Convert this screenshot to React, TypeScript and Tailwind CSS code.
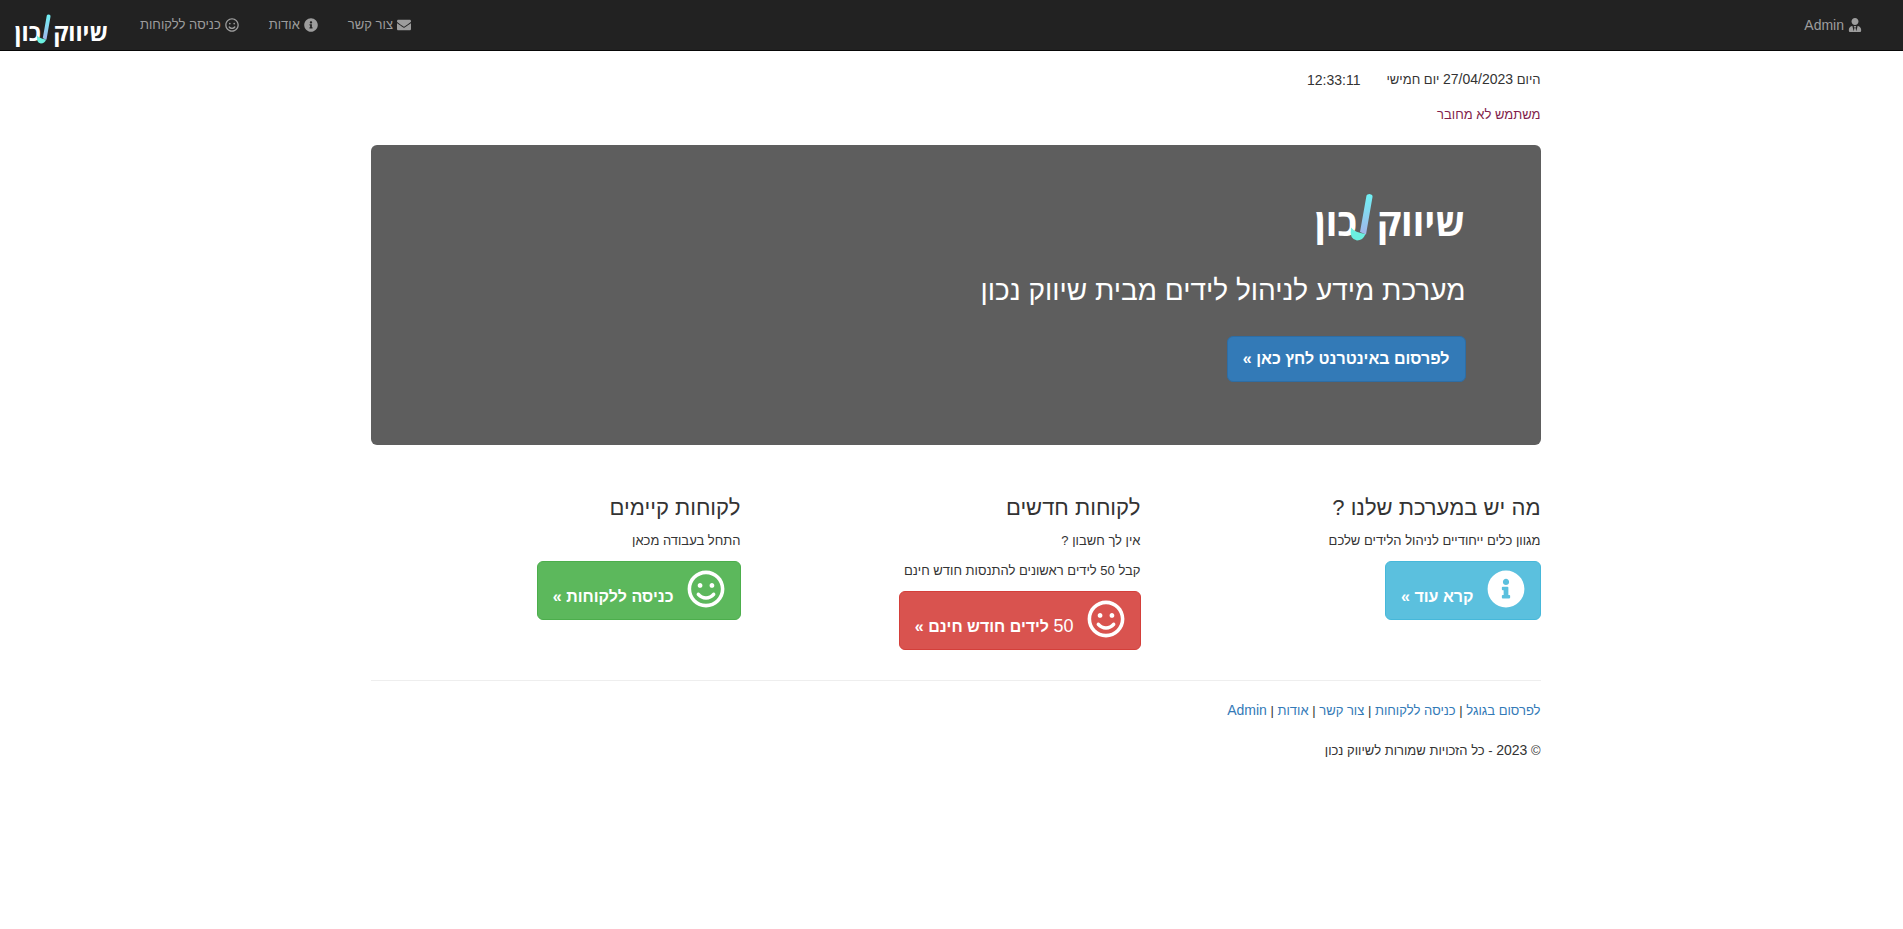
import type { ReactNode } from 'react';
import { FaEnvelope, FaInfoCircle, FaRegSmile, FaUserTie } from 'react-icons/fa';

function Logo({ id, className }: { id: string; className: string }) {
  return (
    <svg viewBox="0 0 150 58" className={`overflow-visible ${className}`} role="img" aria-label="שיווק נכון">
      <defs>
        <linearGradient id={id} x1="0" y1="0" x2="0" y2="1">
          <stop offset="0" stopColor="#6ff3f5" />
          <stop offset="1" stopColor="#a3b4ea" />
        </linearGradient>
      </defs>
      <g fill="#fff" fontFamily="'Open Sans', 'Liberation Sans', sans-serif" fontWeight="700" fontSize="38" direction="rtl">
        <text x="149" y="43">שיווק</text>
        <text x="41" y="43">כון</text>
      </g>
      <path d="M50.5 2.5 Q51 1 53.5 1 Q57 1.5 56.5 4 L50 41.5 L44 39 Z" fill={`url(#${id})`} />
      <path d="M35 34.5 Q39 39.5 49.5 41 Q47 47.5 41 47.5 Q33 46 35 34.5 Z" fill="#6bf0e0" />
    </svg>
  );
}

const navItems = [
  { label: 'צור קשר', icon: <FaEnvelope className="size-[14px]" /> },
  { label: 'אודות', icon: <FaInfoCircle className="size-[14px]" /> },
  { label: 'כניסה ללקוחות', icon: <FaRegSmile className="size-[14px]" /> },
];

const footerLinks = ['לפרסום בגוגל', 'כניסה ללקוחות', 'צור קשר', 'אודות'];

const columns = [
  {
    title: 'מה יש במערכת שלנו ?',
    lines: ['מגוון כלים ייחודיים לניהול הלידים שלכם'],
    button: 'קרא עוד »',
    icon: <FaInfoCircle className="size-[38px]" />,
    color: 'bg-[#5bc0de] border-[#46b8da]',
  },
  {
    title: 'לקוחות חדשים',
    lines: ['אין לך חשבון ?', 'קבל 50 לידים ראשונים להתנסות חודש חינם'],
    button: (
      <>
        <span className="text-lg leading-none font-normal">50</span> לידים חודש חינם »
      </>
    ),
    icon: <FaRegSmile className="size-[38px]" />,
    color: 'bg-[#d9534f] border-[#d43f3a]',
  },
  {
    title: 'לקוחות קיימים',
    lines: ['התחל בעבודה מכאן'],
    button: 'כניסה ללקוחות »',
    icon: <FaRegSmile className="size-[38px]" />,
    color: 'bg-[#5cb85c] border-[#4cae4c]',
  },
];

function NavLink({ children }: { children: ReactNode }) {
  return (
    <a href="#" className="flex items-center gap-1 px-[15px] text-[#9d9d9d] hover:text-white">
      {children}
    </a>
  );
}

export default function App() {
  return (
    <div dir="rtl" className="min-h-screen bg-white font-['Liberation_Sans',Arial,sans-serif] text-[13px] leading-5 text-[#333]">
      <nav className="flex h-[51px] justify-between border-b border-[#080808] bg-[#222] pr-[26px] pl-[15px]">
        <NavLink>
          <FaUserTie className="size-[14px]" />
          <span className="text-sm">Admin</span>
        </NavLink>
        <div className="flex">
          {navItems.map((item) => (
            <NavLink key={item.label}>
              {item.icon}
              {item.label}
            </NavLink>
          ))}
          <a href="#" className="mr-4 pt-[14px]">
            <Logo id="nav-logo" className="h-9 w-[94px]" />
          </a>
        </div>
      </nav>

      <div className="mx-auto max-w-[1200px] pt-[19px] pr-[11px] pl-[19px]">
        <p className="mb-[15px] flex gap-[26px]">
          <span>
            היום <span className="text-sm leading-none">27/04/2023</span> יום חמישי
          </span>
          <span className="text-sm leading-5">12:33:11</span>
        </p>
        <p className="mb-5 text-[#821e4b]">משתמש לא מחובר</p>

        <header className="mb-[30px] rounded-md bg-[#5e5e5e] px-[75px] pt-12 pb-[63px] text-white">
          <Logo id="hero-logo" className="h-[58px] w-[150px]" />
          <h1 className="mt-6 mb-[29px] text-[28px] leading-8">מערכת מידע לניהול לידים מבית שיווק נכון</h1>
          <a href="#" className="inline-block rounded-md border border-[#2e6da4] bg-[#337ab7] px-[15px] py-[10px] text-base leading-6 font-bold">
            לפרסום באינטרנט לחץ כאן »
          </a>
        </header>

        <main className="-mx-[15px] flex">
          {columns.map((col) => (
            <section key={col.title} className="flex-1 px-[15px]">
              <h2 className="mt-5 mb-[10px] text-[22px] leading-[26px]">{col.title}</h2>
              {col.lines.map((line) => (
                <p key={line} className="mb-[10px]">{line}</p>
              ))}
              <a href="#" className={`inline-flex h-[59px] gap-[13px] rounded-md border px-[15px] pt-2 text-base font-bold text-white ${col.color}`}>
                {col.icon}
                <span className="pt-[15px] leading-6">{col.button}</span>
              </a>
            </section>
          ))}
        </main>

        <hr className="mt-[30px] mb-5 border-[#eee]" />
        <footer>
          <p className="mb-5">
            {footerLinks.map((link) => (
              <span key={link}>
                <a href="#" className="text-[#337ab7] hover:underline">{link}</a>
                {' | '}
              </span>
            ))}
            <a href="#" className="text-sm leading-none text-[#337ab7] hover:underline">Admin</a>
          </p>
          <p>
            © <span className="text-sm leading-none">2023</span> - כל הזכויות שמורות לשיווק נכון
          </p>
        </footer>
      </div>
    </div>
  );
}
